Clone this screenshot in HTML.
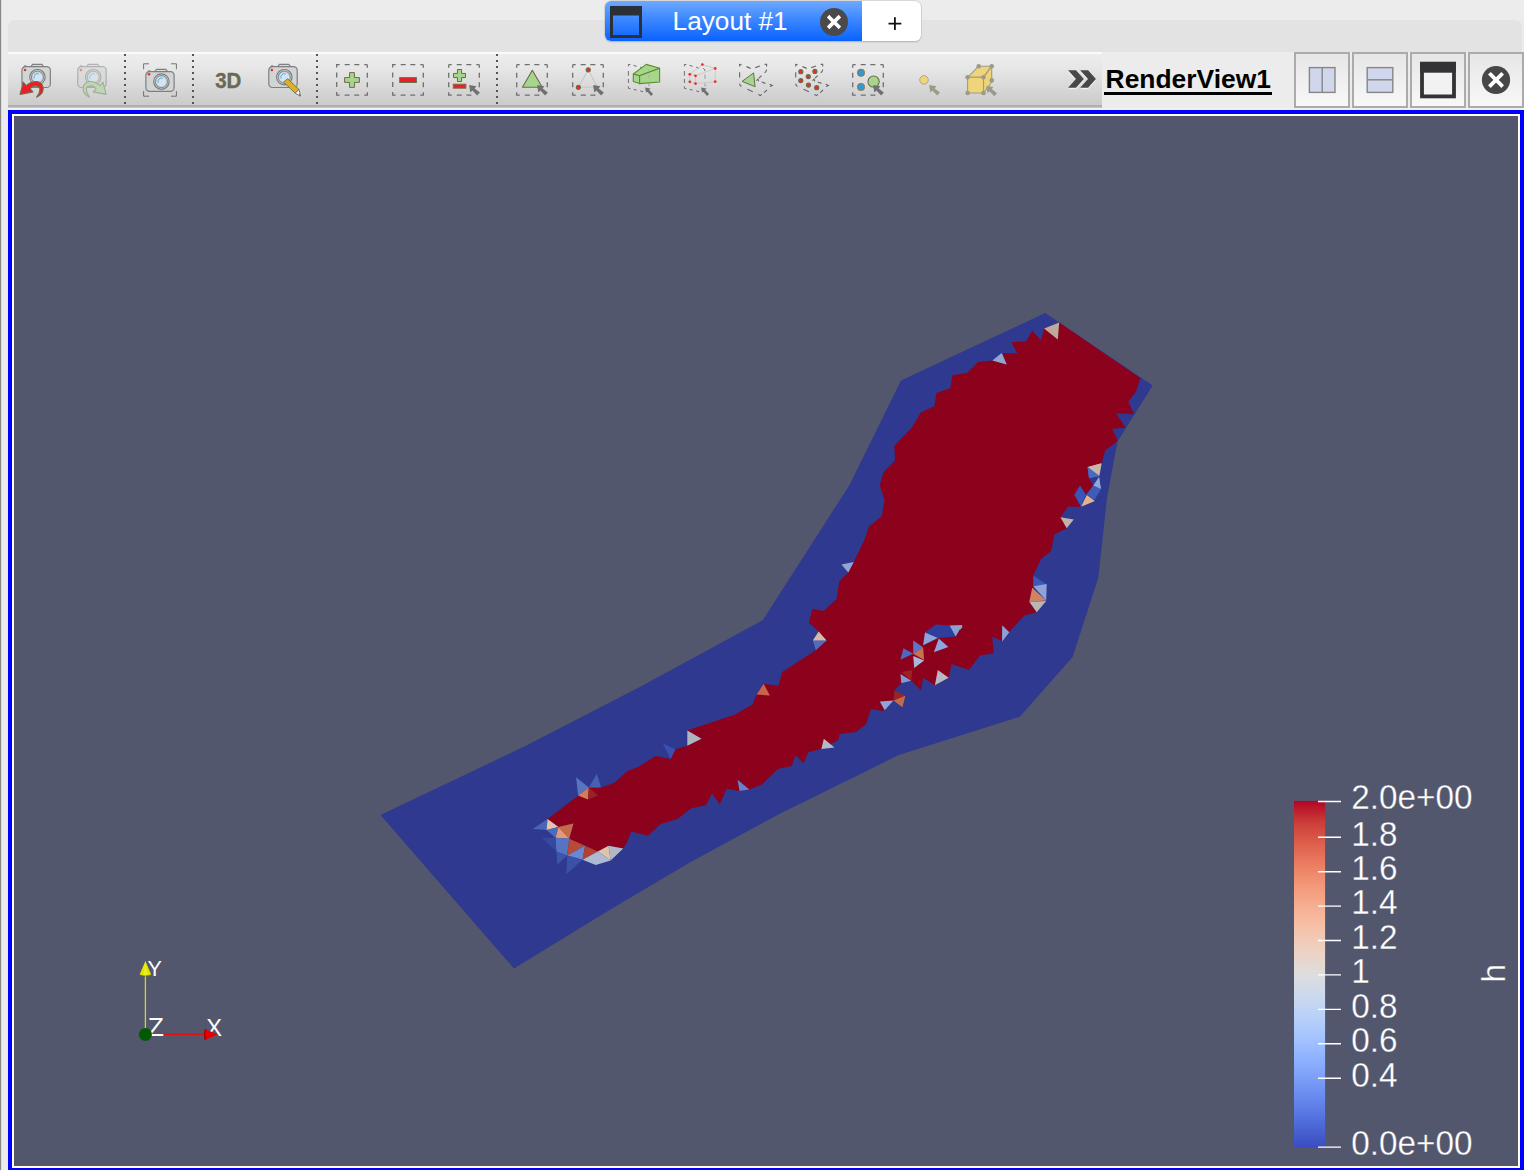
<!DOCTYPE html>
<html lang="en">
<head>
<meta charset="utf-8">
<title>Layout #1 - RenderView1</title>
<style>
html,body{margin:0;padding:0;}
body{width:1524px;height:1170px;overflow:hidden;background:#ececec;position:relative;font-family:"Liberation Sans",sans-serif;}
.abs{position:absolute;}
#leftedge{left:0;top:0;width:2px;height:1170px;background:linear-gradient(90deg,#858585 0,#8d8d8d 45%,#e6e6e6 80%,#ececec 100%);}
#pane{left:8px;top:20px;width:1514px;height:40px;background:#e3e3e3;border-radius:7px 7px 0 0;}
#paneline{left:8px;top:52px;width:1516px;height:2px;background:#fbfbfb;}
#rightbg{left:1102px;top:52px;width:422px;height:58px;background:#ececec;}
#toolbar{left:8px;top:54px;width:1094px;height:51px;background:linear-gradient(180deg,#ededed 0%,#e6e6e6 30%,#d6d6d6 70%,#cbcbcb 100%);}
#tbshadow{left:8px;top:105px;width:1094px;height:3px;background:linear-gradient(180deg,#adadad 0,#b0b0b0 60%,#d8d8d8 100%);}
#tbgap{left:8px;top:108px;width:1516px;height:2px;background:#f1f1f1;}
#frame{left:8px;top:110px;width:1508px;height:1054px;border:4px solid #0000ff;box-sizing:content-box;background:#fffff0;}
#view{left:14px;top:116px;width:1504px;height:1050px;background:#52576e;overflow:hidden;}
.sep{width:2px;top:54px;height:51px;background:repeating-linear-gradient(180deg,#555 0,#555 2px,transparent 2px,transparent 6px);}
.ico{width:32px;height:32px;top:64px;}
.vbtn{top:52px;width:52px;height:52px;border:2px solid #ababab;background:linear-gradient(180deg,#e6e6e6,#f8f8f8);}
#tabs{left:605px;top:1px;width:316px;height:40px;border-radius:6px;background:#fff;box-shadow:0 0 0 0.5px #c4c4c4,0 1px 1.5px rgba(0,0,0,.25);overflow:hidden;}
#tabsel{left:0;top:0;width:257px;height:40px;background:linear-gradient(180deg,#6ea8ff 0%,#3d88ff 45%,#0a62ff 100%);}
#tabtxt{left:67.6px;top:5px;font-size:26.2px;line-height:30px;color:#fff;white-space:nowrap;}
#plus{left:257px;top:0;width:59px;height:40px;}
#rvtitle{left:1105.6px;top:63.8px;font-size:26.4px;line-height:30px;font-weight:bold;color:#000;white-space:nowrap;}
#rvul{left:1104px;top:92px;width:168px;height:2.8px;background:#000;}
</style>
</head>
<body>
<div class="abs" id="pane"></div>
<div class="abs" id="paneline"></div>
<div class="abs" id="toolbar"></div>
<div class="abs" id="tbshadow"></div>
<div class="abs" id="rightbg"></div>
<div class="abs" id="tbgap"></div>
<div class="abs" id="leftedge"></div>

<!-- TAB BAR -->
<div class="abs" id="tabs">
  <div class="abs" id="tabsel">
    <svg class="abs" style="left:5px;top:5px" width="32" height="32" viewBox="0 0 32 32"><rect x="1.5" y="1.5" width="29" height="29" fill="none" stroke="#2b2f38" stroke-width="3"/><rect x="0" y="0" width="32" height="9.5" fill="#2b2f38"/></svg>
    <div class="abs" id="tabtxt">Layout #1</div>
    <svg class="abs" style="left:214px;top:6px" width="30" height="30" viewBox="0 0 30 30"><circle cx="15" cy="15" r="14" fill="#4a4a4c"/><path d="M10.4 10.4L19.6 19.6M19.6 10.4L10.4 19.6" stroke="#fff" stroke-width="3.6" stroke-linecap="square"/></svg>
  </div>
  <svg class="abs" id="plus" width="59" height="40" viewBox="0 0 59 40"><path d="M26.5 22.7H39.3M32.9 16.3V29.1" stroke="#111" stroke-width="1.8" fill="none"/></svg>
</div>

<!-- TOOLBAR ICONS -->
<svg class="abs" style="left:0;top:0" width="1524" height="110" viewBox="0 0 1524 110">
<path d="M125 54V106" stroke="#555" stroke-width="2" stroke-dasharray="2 4" fill="none"/>
<path d="M193 54V106" stroke="#555" stroke-width="2" stroke-dasharray="2 4" fill="none"/>
<path d="M317 54V106" stroke="#555" stroke-width="2" stroke-dasharray="2 4" fill="none"/>
<path d="M497 54V106" stroke="#555" stroke-width="2" stroke-dasharray="2 4" fill="none"/>
<g transform="translate(21.35,66.1)" opacity="1.0">
<path d="M9.6 0.4L11.2 -1.7H20.6L22.2 0.4" fill="#d9dbdb" stroke="#7f7f7f" stroke-width="1.2" stroke-linejoin="round"/>
<path d="M1.6 1.8L3 -0.9H4.6L6.4 0.3Z" fill="#8a8a8a"/>
<rect x="0.6" y="0.6" width="28.400000000000002" height="20.8" rx="3.6" fill="#d2d5d5" stroke="#7f7f7f" stroke-width="1.2"/>
<circle cx="16.1" cy="11.1" r="7.7" fill="#d6d9d9" stroke="#7d7d7d" stroke-width="1.2"/>
<circle cx="16.1" cy="11.1" r="6.1" fill="#c6caca" stroke="#858585" stroke-width="1"/>
<circle cx="16.1" cy="11.1" r="4.8" fill="#cfe5f6"/>
<path d="M12.8 12.299999999999999A3.6 3.6 0 0 1 17.5 7.8" fill="none" stroke="#52acdf" stroke-width="1"/>
<circle cx="3.7" cy="3.9" r="1.25" fill="#ee2a1c"/>
</g>
<path transform="translate(20,64)" d="M0.1 30.4L3.2 18.1L6.1 21.6C9 19 13 17.3 16.8 17.5C21 17.8 23.3 21.5 23.2 24.8C23.1 28.5 20.5 31.5 16.5 33.3C18.5 31 19.8 28.3 19.9 25.4C19.9 23.3 18 22 14.9 21.9C13 22 11.4 23 10.2 24.8L12.9 27.9Z" fill="#ee1c24" stroke="#76694a" stroke-width="1.1" stroke-linejoin="round"/>
<g transform="translate(77.15,66.1)" opacity="0.5">
<path d="M9.6 0.4L11.2 -1.7H20.6L22.2 0.4" fill="#d9dbdb" stroke="#7f7f7f" stroke-width="1.2" stroke-linejoin="round"/>
<path d="M1.6 1.8L3 -0.9H4.6L6.4 0.3Z" fill="#8a8a8a"/>
<rect x="0.6" y="0.6" width="28.400000000000002" height="20.8" rx="3.6" fill="#d2d5d5" stroke="#7f7f7f" stroke-width="1.2"/>
<circle cx="16.1" cy="11.1" r="7.7" fill="#d6d9d9" stroke="#7d7d7d" stroke-width="1.2"/>
<circle cx="16.1" cy="11.1" r="6.1" fill="#c6caca" stroke="#858585" stroke-width="1"/>
<circle cx="16.1" cy="11.1" r="4.8" fill="#cfe5f6"/>
<path d="M12.8 12.299999999999999A3.6 3.6 0 0 1 17.5 7.8" fill="none" stroke="#52acdf" stroke-width="1"/>
<circle cx="3.7" cy="3.9" r="1.25" fill="#ee2a1c"/>
</g>
<path transform="translate(106.2,64) scale(-1,1)" d="M0.1 30.4L3.2 18.1L6.1 21.6C9 19 13 17.3 16.8 17.5C21 17.8 23.3 21.5 23.2 24.8C23.1 28.5 20.5 31.5 16.5 33.3C18.5 31 19.8 28.3 19.9 25.4C19.9 23.3 18 22 14.9 21.9C13 22 11.4 23 10.2 24.8L12.9 27.9Z" fill="#bdd6b4" stroke="#a3ad98" stroke-width="1.1" stroke-linejoin="round"/>
<g transform="translate(145.3,71.1)" opacity="1.0">
<path d="M9.6 0.4L11.2 -1.7H20.6L22.2 0.4" fill="#d9dbdb" stroke="#7f7f7f" stroke-width="1.2" stroke-linejoin="round"/>
<path d="M1.6 1.8L3 -0.9H4.6L6.4 0.3Z" fill="#8a8a8a"/>
<rect x="0.6" y="0.6" width="28.2" height="19.6" rx="3.6" fill="#d2d5d5" stroke="#7f7f7f" stroke-width="1.2"/>
<circle cx="16.1" cy="10.5" r="7.7" fill="#d6d9d9" stroke="#7d7d7d" stroke-width="1.2"/>
<circle cx="16.1" cy="10.5" r="6.1" fill="#c6caca" stroke="#858585" stroke-width="1"/>
<circle cx="16.1" cy="10.5" r="4.8" fill="#cfe5f6"/>
<path d="M12.8 11.7A3.6 3.6 0 0 1 17.5 7.2" fill="none" stroke="#52acdf" stroke-width="1"/>
<circle cx="3.7" cy="3.2" r="1.25" fill="#ee2a1c"/>
</g>
<path d="M143.6 69.2V63.8H149M171 63.8H176.4V69.2M176.4 91V96.2H171M149 96.2H143.6V91" fill="none" stroke="#666" stroke-width="0.9"/>
<text transform="translate(215.2,88.3) scale(0.9,1)" font-family="Liberation Sans, sans-serif" font-weight="bold" font-size="22.8" fill="#6a6a54" stroke="#6a6a54" stroke-width="0.35">3D</text>
<g transform="translate(268.2,66.1)" opacity="1.0">
<path d="M9.6 0.4L11.2 -1.7H20.6L22.2 0.4" fill="#d9dbdb" stroke="#7f7f7f" stroke-width="1.2" stroke-linejoin="round"/>
<path d="M1.6 1.8L3 -0.9H4.6L6.4 0.3Z" fill="#8a8a8a"/>
<rect x="0.6" y="0.6" width="28.400000000000002" height="20.8" rx="3.6" fill="#d2d5d5" stroke="#7f7f7f" stroke-width="1.2"/>
<circle cx="16.1" cy="11.1" r="7.7" fill="#d6d9d9" stroke="#7d7d7d" stroke-width="1.2"/>
<circle cx="16.1" cy="11.1" r="6.1" fill="#c6caca" stroke="#858585" stroke-width="1"/>
<circle cx="16.1" cy="11.1" r="4.8" fill="#cfe5f6"/>
<path d="M12.8 12.299999999999999A3.6 3.6 0 0 1 17.5 7.8" fill="none" stroke="#52acdf" stroke-width="1"/>
<circle cx="3.7" cy="3.9" r="1.25" fill="#ee2a1c"/>
</g>
<path d="M283.6 82.1L287.5 78.7L299 89.4L295.2 93.2Z" fill="#e2b326" stroke="#6b6b4c" stroke-width="0.9" stroke-linejoin="round"/>
<path d="M285.4 80.6L297 91.4M286.6 79.6L298.1 90.4M284.6 81.6L296.2 92.4" stroke="#c79a14" stroke-width="0.5" stroke-dasharray="0.8 0.8" fill="none"/>
<path d="M295.2 93.2L299 89.4L300.5 96.2Z" fill="#fff" stroke="#6b6b4c" stroke-width="0.9" stroke-linejoin="round"/>
<path d="M298.6 95L300 93.8L300.5 96.2Z" fill="#6b6b4c"/>
<path d="M336.7 64.7h30.6v30.5h-30.6z" fill="none" stroke="#6f6f6f" stroke-width="1.3" stroke-dasharray="3 5 5 4.6 5 5 3 0"/>
<path d="M349.6 72.6h4.8v5h5v4.8h-5v5h-4.8v-5h-5v-4.8h5z" fill="#a8d58c" stroke="#6b6b4c" stroke-width="1"/>
<path d="M392.7 64.7h30.6v30.5h-30.6z" fill="none" stroke="#6f6f6f" stroke-width="1.3" stroke-dasharray="3 5 5 4.6 5 5 3 0"/>
<rect x="399.7" y="77.6" width="16.7" height="4.9" fill="#ee1c24" stroke="#6a7050" stroke-width="1"/>
<path d="M448.7 64.7h30.6v22.7" fill="none" stroke="#6f6f6f" stroke-width="1.3" stroke-dasharray="3 5 5 4.6 5 5 3 0"/><path d="M448.7 64.7v30.5h23" fill="none" stroke="#6f6f6f" stroke-width="1.3" stroke-dasharray="3 5 5 4.6 5 5 3 0"/>
<path d="M457.45 69.5h4.1v3.95h3.95v4.1h-3.95v3.95h-4.1v-3.95h-3.95v-4.1h3.95z" fill="#a8d58c" stroke="#6b6b4c" stroke-width="1"/>
<rect x="453.3" y="84.2" width="12.6" height="4" fill="#ee1c24" stroke="#7a7050" stroke-width="1"/>
<path transform="translate(448,64)" d="M21.1 21.1L28.4 22.3L26.6 24.4L31.9 28.6L29.2 31.6L24.3 26.6L22.3 28.4Z" fill="#707070"/>
<path d="M516.7 64.7h30.6v22.7" fill="none" stroke="#6f6f6f" stroke-width="1.3" stroke-dasharray="3 5 5 4.6 5 5 3 0"/><path d="M516.7 64.7v30.5h23" fill="none" stroke="#6f6f6f" stroke-width="1.3" stroke-dasharray="3 5 5 4.6 5 5 3 0"/>
<path d="M532.3 70.3L542.2 87.3H522.5Z" fill="#a8d58c" stroke="#6b6b4c" stroke-width="1.1" stroke-linejoin="round"/>
<path transform="translate(516,64)" d="M21.1 21.1L28.4 22.3L26.6 24.4L31.9 28.6L29.2 31.6L24.3 26.6L22.3 28.4Z" fill="#707070"/>
<path d="M572.7 64.7h30.6v22.7" fill="none" stroke="#6f6f6f" stroke-width="1.3" stroke-dasharray="3 5 5 4.6 5 5 3 0"/><path d="M572.7 64.7v30.5h23" fill="none" stroke="#6f6f6f" stroke-width="1.3" stroke-dasharray="3 5 5 4.6 5 5 3 0"/>
<path d="M588.25 69.8L578.4 87.3H597.5Z" fill="none" stroke="#c4c8c4" stroke-width="1.1"/>
<circle cx="588.25" cy="69.8" r="2.05" fill="#ee2a24" stroke="#6b6b4c" stroke-width="1.1"/>
<circle cx="578.4" cy="87.3" r="2.05" fill="#ee2a24" stroke="#6b6b4c" stroke-width="1.1"/>
<path transform="translate(572,64)" d="M21.1 21.1L28.4 22.3L26.6 24.4L31.9 28.6L29.2 31.6L24.3 26.6L22.3 28.4Z" fill="#707070"/>
<g transform="translate(628,64)" fill="none" stroke="#6e6e6e" stroke-width="1"><path d="M0.4 2.4V0.4L2.4 0.6M5.6 1.4L8.6 2.3M12.2 3.2L15.2 4M19.2 4.4Q20.9 5 21 7"/><path d="M0.4 7V11.6M0.4 15V19M0.4 22.4V24.3L2.4 24.7M5.8 25.5L8.6 26.1M12.2 27L15.2 27.6"/><path d="M21 10.4V14.8M21 19.4V22.4" stroke="#9a9a9a"/></g>
<g transform="translate(628,64)" fill="#a8d58c" stroke="#5b8d2c" stroke-width="1.1" stroke-linejoin="round"><path d="M5.3 9.95L18.3 0.4L31.6 4.2L11.6 11.7Z"/><path d="M5.3 9.95L11.6 11.7V19.6L5.3 17.6Z"/><path d="M11.6 11.7L31.6 4.2V18L11.6 19.6Z"/></g>
<path transform="translate(628,64)" d="M19.6 4.6Q20.9 5.2 21 7.2M21 10.4V14.8" stroke="#a9b8a2" stroke-width="1.1" fill="none"/>
<path transform="translate(628,64)" d="M17.1 23.5L22.5 24.4L21.2 25.9L25.1 30L23 32L19.4 27.7L18 28.6Z" fill="#707070"/>
<g transform="translate(684,64)" fill="none" stroke="#6e6e6e" stroke-width="1"><path d="M0.4 2.4V0.4L2.4 0.6M5.6 1.4L8.6 2.3M12.2 3.2L15.2 4M19.2 4.4Q20.9 5 21 7"/><path d="M0.4 7V11.6M0.4 15V19M0.4 22.4V24.3L2.4 24.7M5.8 25.5L8.6 26.1M12.2 27L15.2 27.6"/><path d="M21 10.4V14.8M21 19.4V22.4" stroke="#9a9a9a"/></g>
<g transform="translate(684,64)" fill="none" stroke="#c9cbc9" stroke-width="1"><path d="M5.8 10.3L18.4 0.6L31.2 4.4L11.5 11.8ZM5.8 10.3V17.8L11.5 19.6V11.8M11.5 19.6L31.2 17.7V4.4"/></g>
<circle cx="702.4" cy="64.5" r="1.35" fill="#ee2a24"/>
<circle cx="715.2" cy="68.4" r="1.35" fill="#ee2a24"/>
<circle cx="689.8" cy="74.3" r="1.35" fill="#ee2a24"/>
<circle cx="695.5" cy="75.8" r="1.35" fill="#ee2a24"/>
<circle cx="689.8" cy="81.8" r="1.35" fill="#ee2a24"/>
<circle cx="695.5" cy="83.6" r="1.35" fill="#ee2a24"/>
<circle cx="715.2" cy="81.7" r="1.35" fill="#ee2a24"/>
<path transform="translate(684,64)" d="M17.1 23.5L22.5 24.4L21.2 25.9L25.1 30L23 32L19.4 27.7L18 28.6Z" fill="#707070"/>
<g transform="translate(0,0)" fill="none" stroke="#6a6a6a" stroke-width="1.15"><path d="M739.6 66.4V64.4L741.6 64.7M746.4 66.6L750.6 68.4M755.2 67.6L760 66M764.6 64.4H766.6V66.6M766.6 69.5Q766.4 71.6 764.6 72.8M761.6 75.6L759 78"/><path d="M756.4 80.6L758 79L758.6 81.4M761.6 82L765.4 83.4M769.6 84.2L772.3 85.5L770 86.6M767 90L764 92.6M761.8 94.4L760.4 95.6L758.4 94.4M752.8 91.8L747.4 89.2M741.4 86.4Q739.8 85.6 739.6 83.6M739.6 77.6V72.2"/></g>
<path d="M742.1 81.4L753.6 72.9L755.1 86.7Z" fill="#a8d58c" stroke="#6b6b4c" stroke-width="1" stroke-linejoin="round"/>
<g transform="translate(56.1,0)" fill="none" stroke="#6a6a6a" stroke-width="1.15"><path d="M739.6 66.4V64.4L741.6 64.7M746.4 66.6L750.6 68.4M755.2 67.6L760 66M764.6 64.4H766.6V66.6M766.6 69.5Q766.4 71.6 764.6 72.8M761.6 75.6L759 78"/><path d="M756.4 80.6L758 79L758.6 81.4M761.6 82L765.4 83.4M769.6 84.2L772.3 85.5L770 86.6M767 90L764 92.6M761.8 94.4L760.4 95.6L758.4 94.4M752.8 91.8L747.4 89.2M741.4 86.4Q739.8 85.6 739.6 83.6M739.6 77.6V72.2"/></g>
<circle cx="800.8" cy="71.7" r="2.05" fill="#ee2a24" stroke="#6b6b4c" stroke-width="1.1"/>
<circle cx="814.9" cy="71.4" r="2.05" fill="#ee2a24" stroke="#6b6b4c" stroke-width="1.1"/>
<circle cx="808.3" cy="76.6" r="2.05" fill="#ee2a24" stroke="#6b6b4c" stroke-width="1.1"/>
<circle cx="800.8" cy="80.6" r="2.05" fill="#ee2a24" stroke="#6b6b4c" stroke-width="1.1"/>
<circle cx="808.5" cy="85.1" r="2.05" fill="#ee2a24" stroke="#6b6b4c" stroke-width="1.1"/>
<circle cx="816.7" cy="87.7" r="2.05" fill="#ee2a24" stroke="#6b6b4c" stroke-width="1.1"/>
<path d="M852.7 64.7h30.6v22.7" fill="none" stroke="#6f6f6f" stroke-width="1.3" stroke-dasharray="3 5 5 4.6 5 5 3 0"/><path d="M852.7 64.7v30.5h23" fill="none" stroke="#6f6f6f" stroke-width="1.3" stroke-dasharray="3 5 5 4.6 5 5 3 0"/>
<circle cx="861" cy="72.8" r="3.4" fill="#2b9bd9" stroke="#8a7c52" stroke-width="1.1"/>
<circle cx="861" cy="86.9" r="3.4" fill="#2b9bd9" stroke="#8a7c52" stroke-width="1.1"/>
<circle cx="873.6" cy="81.6" r="5.6" fill="#a8d58c" stroke="#6b6b4c" stroke-width="1.1"/>
<path transform="translate(852,64)" d="M21.1 21.1L28.4 22.3L26.6 24.4L31.9 28.6L29.2 31.6L24.3 26.6L22.3 28.4Z" fill="#707070"/>
<circle cx="924" cy="79.9" r="4.3" fill="#f0d479" stroke="#a5a58c" stroke-width="0.9"/>
<path transform="translate(908,64)" d="M21.1 21.1L28.4 22.3L26.6 24.4L31.9 28.6L29.2 31.6L24.3 26.6L22.3 28.4Z" fill="#9b9b88"/>
<g transform="translate(964,64)" fill="#f0d479" stroke="#9b9b88" stroke-width="1.1" stroke-linejoin="round"><path d="M3.6 13.3L14.7 2.2H27.7L19.5 13.3Z"/><path d="M19.5 13.3L27.7 2.2V18L19.5 29Z"/><path d="M3.6 13.3H19.5V29H3.6Z"/></g>
<circle cx="967.6" cy="77.3" r="2.3" fill="#9b9b88"/>
<circle cx="983.5" cy="77.3" r="2.3" fill="#9b9b88"/>
<circle cx="967.6" cy="93" r="2.3" fill="#9b9b88"/>
<circle cx="983.5" cy="93" r="2.3" fill="#9b9b88"/>
<circle cx="978.7" cy="66.2" r="2.3" fill="#9b9b88"/>
<circle cx="991.7" cy="66.2" r="2.3" fill="#9b9b88"/>
<circle cx="991.7" cy="80.4" r="2.3" fill="#9b9b88"/>
<path transform="translate(965.1,64.7)" d="M21.1 21.1L28.4 22.3L26.6 24.4L31.9 28.6L29.2 31.6L24.3 26.6L22.3 28.4Z" fill="#9b9b88"/>
<path d="M1068.1 71.7h7.9l7.8 8.8l-7.8 8.8h-7.9l7.8 -8.8z" fill="#f4f4f4" opacity="0.9"/>
<path d="M1068.1 70.2h7.9l7.8 8.8l-7.8 8.8h-7.9l7.8 -8.8z" fill="#484848"/>
<path d="M1080.2 71.7h7.9l7.8 8.8l-7.8 8.8h-7.9l7.8 -8.8z" fill="#f4f4f4" opacity="0.9"/>
<path d="M1080.2 70.2h7.9l7.8 8.8l-7.8 8.8h-7.9l7.8 -8.8z" fill="#484848"/>
</svg>


<!-- TITLE + VIEW BUTTONS -->
<div class="abs" id="rvtitle">RenderView1</div><div class="abs" id="rvul"></div>
<div class="abs vbtn" style="left:1294px"></div>
<div class="abs vbtn" style="left:1352px"></div>
<div class="abs vbtn" style="left:1410px"></div>
<div class="abs vbtn" style="left:1468px"></div>
<svg class="abs" style="left:1290px;top:50px" width="234" height="60" viewBox="1290 50 234 60">
<rect x="1309.4" y="67.6" width="25.6" height="24.8" fill="#d0d6ec" stroke="#868686" stroke-width="1.4"/><path d="M1322.2 67.6V92.4" stroke="#868686" stroke-width="1.4"/>
<rect x="1367.2" y="67.6" width="25.6" height="24.8" fill="#d0d6ec" stroke="#868686" stroke-width="1.4"/><path d="M1367.2 79.8H1392.8" stroke="#868686" stroke-width="1.4"/>
<rect x="1422" y="63.8" width="32" height="32.6" fill="#f2f2f2" stroke="#333336" stroke-width="3.8"/><rect x="1420.1" y="61.8" width="35.8" height="10.9" fill="#333336"/>
<circle cx="1496" cy="80" r="14.1" fill="#474749"/><path d="M1490.7 74.6L1501.3 85.2M1501.3 74.6L1490.7 85.2" stroke="#fff" stroke-width="3.8" stroke-linecap="square"/>
</svg>


<!-- RENDER VIEW -->
<div class="abs" id="frame"></div>
<div class="abs" id="view">
<svg id="scene" class="abs" style="left:-14px;top:-116px" width="1524" height="1170" viewBox="0 0 1524 1170">
<polygon points="380.5,815 514,968.5 610.3,909.5 691.1,861.7 779.3,813.9 898.8,755.1 1019.8,716.8 1072.6,657 1098.2,578 1107,497.8 1117.5,441.5 1152.7,385.4 1045.2,313 901,380.5 849.5,485 762.7,620.3 639.3,687.2 525.4,746" fill="#2e398f"/>
<polygon points="547.6,819.1 577.1,796.5 588.9,787.6 601.1,787.6 614.5,782.7 627.3,770.9 638.1,766.9 655.8,756.1 670.6,759.1 675.5,749.2 687.3,745.7 701.5,738.8 687.3,730.5 734.6,714.8 753.3,703.9 752.8,703.4 756.7,694.5 763.6,683.7 778.4,685.7 782.3,671.9 815.8,650.2 826.6,640.4 818.7,631.5 808.9,622.7 812.4,608.9 823.7,610.9 836.5,599.1 839.4,581.3 848.3,572.5 853.8,562.0 864.4,540.0 869,526.2 871,525.1 881.8,515.9 884.6,500.0 879.7,485.0 883.6,472.2 895.0,460.4 894.4,445.7 912.2,427.0 921.0,412.2 934.4,406.3 936.4,392.9 950.2,388.2 952.5,375.2 967.3,372.8 978.1,362.0 992.3,360.6 1006.7,364.6 1002.7,353.1 1017.5,353.5 1011.2,342.3 1026.3,341.3 1032.2,330.5 1041.1,340.4 1044.1,328.5 1059.2,322.6 1140.5,378.3 1135.6,392.5 1128.1,401.4 1134.0,414.2 1115.9,413.2 1125.7,427.6 1112.0,428.9 1117.9,440.7 1105.1,450.6 1101.7,463.4 1101.1,463.3 1087.8,467.1 1088.9,477.8 1093.3,485.6 1085.6,494.4 1080.0,485.6 1074.4,494.4 1081.1,506.7 1067.8,506.7 1061.1,516.7 1066.7,528.2 1054.4,534.4 1051.1,551.1 1041.1,558.9 1033.3,575.6 1033.3,585.6 1029.3,601.8 1036.7,612.2 1024.4,615.6 1008.9,632.2 1002.2,641.1 992.2,636.7 993.8,653.3 980.0,655.6 968.9,670.0 951.6,664.0 948.7,677.8 934.9,685.3 923.1,677.8 921.1,690.6 911.3,680.7 901.4,683.3 894.5,690.6 893.5,700.4 883.7,710.9 870.9,709.3 866.0,724.1 856.1,731.9 839.4,733.9 838.4,740.0 820.0,749.2 808.4,752.2 803.5,763.4 795.6,755.1 791.7,765.9 777.9,768.9 762.1,784.6 749.3,789.6 739.5,790.9 738.5,790.9 726.7,788.6 719.8,804.3 711.9,793.5 706.0,805.3 691.3,808.3 677.5,819.1 660.7,824.0 648.0,835.8 631.2,831.5 627.3,841.7 623.3,848.6 608.6,845.7 597.8,851.6 585.0,845.7 569.2,838.8 573.5,823.6 558.4,827.0" fill="#8c021c"/>
<polygon points="532.8,828.9 547.6,819.1 546.6,829.9" fill="#4a64b6"/>
<polygon points="547.6,819.1 558.4,827.0 546.6,829.9" fill="#e6c3ac"/>
<polygon points="558.4,827.0 573.5,823.6 569.2,838.8" fill="#c56a4a"/>
<polygon points="558.4,827.0 569.2,838.8 555.4,837.8" fill="#e39a78"/>
<polygon points="546.6,829.9 558.4,827.0 555.4,837.8" fill="#4d6cc0"/>
<polygon points="555.4,837.8 569.2,838.8 567.2,855.5 556.4,851.6" fill="#5674c4"/>
<polygon points="569.2,838.8 585.0,845.7 567.2,855.5" fill="#b84a38"/>
<polygon points="567.2,855.5 585.0,845.7 582.6,859.8" fill="#6a88d2"/>
<polygon points="585.0,845.7 597.8,851.6 582.6,859.8" fill="#b6402f"/>
<polygon points="582.6,859.8 597.8,851.6 610.6,860.4 595.8,865.0" fill="#aeb9d4"/>
<polygon points="597.8,851.6 608.6,845.7 610.6,860.4" fill="#dec2aa"/>
<polygon points="608.6,845.7 623.3,848.6 610.6,860.4" fill="#b4b8c6"/>
<polygon points="556.4,851.6 567.2,855.5 557.4,864.4" fill="#3f55ab"/>
<polygon points="567.2,855.5 582.6,859.8 566.3,874.2" fill="#3c50a8"/>
<polygon points="541.7,837.8 555.4,837.8 556.4,851.6" fill="#36489f"/>
<polygon points="576.1,777.2 588.9,787.6 578.1,795.5" fill="#5876c0"/>
<polygon points="588.9,787.6 596.8,773.8 601.1,787.6" fill="#4760b4"/>
<polygon points="578.1,795.5 588.9,787.6 587.9,799.4" fill="#d27c5a"/>
<polygon points="588.9,787.6 597.8,795.5 587.9,799.4" fill="#962624"/>
<polygon points="687.3,730.5 701.5,738.8 687.3,745.7" fill="#afb5bf"/>
<polygon points="662.7,743.3 675.5,749.2 670.6,759.1" fill="#3b4fae"/>
<polygon points="737.5,779.7 749.3,789.6 739.5,790.9" fill="#6382d2"/>
<polygon points="763.6,683.7 769.9,695.5 756.7,694.5" fill="#c8654a"/>
<polygon points="812.8,640.4 826.6,640.4 815.8,650.2" fill="#4f6cbe"/>
<polygon points="818.7,631.5 826.6,640.4 812.8,640.4" fill="#d9b8a8"/>
<polygon points="841.4,564.6 853.8,562.0 848.3,572.5" fill="#92a6d2"/>
<polygon points="879.8,701.4 893.5,700.4 884.7,710.3" fill="#8fa6da"/>
<polygon points="893.5,700.4 905.4,695.5 902.4,707.3" fill="#c6694a"/>
<polygon points="894.5,690.6 905.4,695.5 893.5,700.4" fill="#9a2422"/>
<polygon points="900.4,673.9 911.3,680.7 901.4,683.3" fill="#7f9ad8"/>
<polygon points="901.4,671.9 912.2,669.9 911.3,680.7" fill="#9c2122"/>
<polygon points="937.8,669.9 948.7,677.8 934.9,685.3" fill="#b3b9c6"/>
<polygon points="1002.8,626.0 1008.7,632.5 1002.2,641.4" fill="#8ea4d6"/>
<polygon points="925.0,632.5 935.9,624.6 949.6,625.6 962.4,625.0 955.6,636.5 937.8,638.0 924.1,645.3" fill="#2f3e9c"/>
<polygon points="949.6,625.6 962.4,625.0 955.6,636.5" fill="#8aa0d2"/>
<polygon points="925.0,632.5 937.8,638.0 923.1,645.3" fill="#8da4d8"/>
<polygon points="933.9,652.2 938.8,638.4 948.3,646.9" fill="#8da6dc"/>
<polygon points="913.2,640.4 923.1,647.3 913.2,653.8" fill="#5a78c8"/>
<polygon points="913.2,653.8 923.1,647.3 924.1,660.1" fill="#c8724f"/>
<polygon points="900.4,659.7 903.4,648.3 913.2,653.8" fill="#4c68c0"/>
<polygon points="913.2,656.1 924.1,660.5 914.2,668.0" fill="#a9b8da"/>
<polygon points="1044.1,328.5 1059.2,322.6 1057.8,339.4" fill="#bcab9c"/>
<polygon points="992.3,360.6 1001.7,353.1 1006.7,364.6" fill="#93a6d0"/>
<polygon points="1087.4,467.3 1101.7,463.4 1099.2,476.2" fill="#c9b5a4"/>
<polygon points="1087.4,467.3 1099.2,476.2 1089.3,478.1" fill="#4f6ec2"/>
<polygon points="1093.3,486.0 1099.2,477.2 1100.6,489.0" fill="#93a9da"/>
<polygon points="1087.8,467.1 1101.1,463.3 1098.9,475.6" fill="#c9b6a6"/>
<polygon points="1087.8,467.1 1098.9,475.6 1088.9,478.2" fill="#4b69c1"/>
<polygon points="1093.3,485.6 1098.9,477.3 1101.1,488.9" fill="#90a8d8"/>
<polygon points="1086.7,494.4 1093.3,485.6 1101.1,488.9 1094.4,500.0" fill="#3f5db8"/>
<polygon points="1081.1,506.7 1086.7,495.1 1094.9,501.1" fill="#e2b392"/>
<polygon points="1080.0,485.6 1085.6,494.4 1081.1,506.7 1074.4,495.1" fill="#3a55b6"/>
<polygon points="1060.4,517.3 1073.8,519.6 1066.7,528.2" fill="#c2b3a9"/>
<polygon points="1033.3,575.6 1046.7,584.4 1033.3,586.2" fill="#3c59b8"/>
<polygon points="1033.3,586.2 1046.7,584.0 1046.2,600.4" fill="#8ea4d8"/>
<polygon points="1032.2,587.8 1046.2,600.4 1029.3,601.8" fill="#cf8264"/>
<polygon points="1029.3,601.8 1046.2,601.1 1036.7,612.2" fill="#b9b6b3"/>
<polygon points="1002.2,625.6 1009.3,632.2 1002.2,641.1" fill="#8ca3d6"/>
<polygon points="960.0,625.6 962.7,626.7 960.0,630.0" fill="#8ca3d6"/>
<polygon points="823.8,738.7 834.5,747.4 821.4,749" fill="#b3b9c6"/>

<defs><linearGradient id="cw" x1="0" y1="1" x2="0" y2="0">
<stop offset="0.0" stop-color="rgb(59,76,192)"/>
<stop offset="0.0625" stop-color="rgb(77,104,215)"/>
<stop offset="0.125" stop-color="rgb(98,130,234)"/>
<stop offset="0.1875" stop-color="rgb(119,154,247)"/>
<stop offset="0.25" stop-color="rgb(141,176,254)"/>
<stop offset="0.3125" stop-color="rgb(163,194,255)"/>
<stop offset="0.375" stop-color="rgb(184,208,249)"/>
<stop offset="0.4375" stop-color="rgb(204,217,238)"/>
<stop offset="0.5" stop-color="rgb(221,221,221)"/>
<stop offset="0.5625" stop-color="rgb(236,211,197)"/>
<stop offset="0.625" stop-color="rgb(245,196,173)"/>
<stop offset="0.6875" stop-color="rgb(247,177,148)"/>
<stop offset="0.75" stop-color="rgb(244,154,123)"/>
<stop offset="0.8125" stop-color="rgb(236,127,99)"/>
<stop offset="0.875" stop-color="rgb(222,96,77)"/>
<stop offset="0.9375" stop-color="rgb(203,62,56)"/>
<stop offset="1.0" stop-color="rgb(180,4,38)"/>
</linearGradient></defs>
<rect x="1294" y="800.9" width="31.1" height="346.4" fill="url(#cw)"/>
<path d="M1318 801.5H1341M1318 837.2H1341M1318 871.7H1341M1318 906.1H1341M1318 940.5H1341M1318 974.9H1341M1318 1009.4H1341M1318 1043.8H1341M1318 1078.2H1341M1318 1147.1H1341" stroke="#fff" stroke-width="1.4" fill="none"/>
<g font-family="Liberation Sans, sans-serif" font-size="33.3" fill="#fff" stroke="#52576e" stroke-width="0.3">
<text transform="translate(1351.2,809.4) scale(1,1.05)">2.0e+00</text>
<text transform="translate(1351.2,845.5) scale(1,1.05)">1.8</text>
<text transform="translate(1351.2,880.0) scale(1,1.05)">1.6</text>
<text transform="translate(1351.2,914.4) scale(1,1.05)">1.4</text>
<text transform="translate(1351.2,948.8) scale(1,1.05)">1.2</text>
<text transform="translate(1351.2,983.2) scale(1,1.05)">1</text>
<text transform="translate(1351.2,1017.7) scale(1,1.05)">0.8</text>
<text transform="translate(1351.2,1052.1) scale(1,1.05)">0.6</text>
<text transform="translate(1351.2,1086.5) scale(1,1.05)">0.4</text>
<text transform="translate(1351.2,1155.4) scale(1,1.05)">0.0e+00</text>
<text transform="translate(1505.3,982.5) rotate(-90)" font-size="33.5">h</text>
</g>
<path d="M145.4 976V1030" stroke="#d6d61c" stroke-width="1.3"/>
<path d="M145.4 961L151.2 974.6Q145.4 977 139.6 974.6Z" fill="#e2e200"/>
<path d="M145.4 961L147.6 975.6Q145.4 976.2 143.2 975.6Z" fill="#f4f43a" opacity=".55"/>
<path d="M139.6 974.6Q145.4 977 151.2 974.6L150.6 975.6Q145.4 977.6 140.2 975.6Z" fill="#7a7a00"/>
<path d="M150 1034.4H206" stroke="#e20d0d" stroke-width="1.3"/>
<g font-family="Liberation Sans, sans-serif" fill="#fff">
<text x="147.6" y="976.4" font-size="21.5">Y</text>
<text x="147.8" y="1036" font-size="26.5">Z</text>
<text x="206.2" y="1036" font-size="23.6">X</text>
</g>
<path d="M218 1034.4L204.8 1028.9Q203.6 1034.4 204.8 1039.9Z" fill="#e80000"/>
<path d="M204.8 1028.9Q203.6 1034.4 204.8 1039.9L205.8 1040.2Q204.6 1034.4 205.8 1029.2Z" fill="#8a0000"/>
<circle cx="145.4" cy="1034.4" r="6.5" fill="#005a00"/>

</svg>
</div>
</body>
</html>
